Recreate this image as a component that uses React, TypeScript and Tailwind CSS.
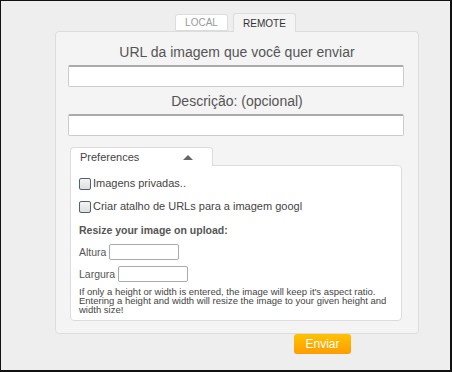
const font = { fontFamily: '"Liberation Sans", Arial, sans-serif' };

const Checkbox = ({ label }: { label: string }) => (
    <label className="flex items-center h-[13px] text-[11px] text-[#444]">
        <span className="w-[12px] h-[12px] border border-[#4d6275] rounded-[2px] bg-gradient-to-b from-[#f4f4f4] to-[#dedede] mr-[2px]" />
        <span>{label}</span>
    </label>
);

const App = () => {
    return (
        <div
            className="w-[452px] h-[372px] bg-[#eeeeee] border-t border-l border-r-2 border-b-2 border-[#111] overflow-hidden"
            style={font}
        >
            <div className="ml-[54px] w-[364px] pt-[12px]">
                {/* Tabs */}
                <div className="flex items-end gap-[5px] ml-[120px]">
                    <div className="w-[53px] h-[17px] bg-white border border-[#dcdcdc] rounded-t-[3px] flex items-center justify-center text-[10px] text-[#999]">
                        LOCAL
                    </div>
                    <div className="relative z-10 w-[63px] h-[19px] bg-[#f4f4f4] border border-b-0 border-[#dcdcdc] rounded-t-[3px] flex items-center justify-center text-[10px] text-[#333] -mb-px">
                        REMOTE
                    </div>
                </div>

                {/* Main panel */}
                <div className="bg-[#f4f4f4] border border-[#dcdcdc] rounded-[4px] pt-[10px] pb-[12px]">
                    <div className="text-center text-[14px] leading-[20px] text-[#555]">
                        URL da imagem que você quer enviar
                    </div>
                    <div className="ml-[12px] mt-[3px] w-[336px] h-[22px] bg-white border border-[#ccc] border-t-[#aaa] border-t-2 rounded-[2px]" />
                    <div className="text-center text-[14px] leading-[20px] text-[#555] mt-[4px]">
                        Descrição: (opcional)
                    </div>
                    <div className="ml-[12px] mt-[3px] w-[336px] h-[22px] bg-white border border-[#ccc] border-t-[#aaa] border-t-2 rounded-[2px]" />

                    {/* Preferences */}
                    <div className="ml-[14px] mt-[11px] w-[332px]">
                        <div className="relative z-10 w-[143px] h-[19px] bg-white border border-b-0 border-[#dcdcdc] rounded-t-[4px] flex items-center pl-[9px] text-[11px] text-[#444] -mb-px">
                            <span>Preferences</span>
                            <span className="ml-[44px] w-0 h-0 border-l-[5px] border-r-[5px] border-b-[5px] border-l-transparent border-r-transparent border-b-[#666]" />
                        </div>
                        <div className="bg-white border border-[#dcdcdc] rounded-b-[4px] rounded-tr-[4px] pl-[8px] pr-[6px] pt-[11px] pb-[6px]">
                            <Checkbox label="Imagens privadas.." />
                            <div className="mt-[10px]">
                                <Checkbox label="Criar atalho de URLs para a imagem googl" />
                            </div>
                            <div className="mt-[10px] text-[10.5px] font-bold text-[#555] leading-[14px]">
                                Resize your image on upload:
                            </div>
                            <div className="mt-[7px] flex items-center h-[16px] text-[10.5px] leading-[16px] text-[#555]">
                                <span>Altura</span>
                                <span className="ml-[3px] w-[70px] h-[16px] border border-[#aaa] rounded-[2px] bg-white" />
                            </div>
                            <div className="mt-[6px] flex items-center h-[16px] text-[10.5px] leading-[16px] text-[#555]">
                                <span>Largura</span>
                                <span className="ml-[3px] w-[70px] h-[16px] border border-[#aaa] rounded-[2px] bg-white" />
                            </div>
                            <p className="mt-[5px] text-[9.5px] leading-[9px] text-[#444]">
                                If only a height or width is entered, the image will keep it's aspect ratio. Entering a height and width will resize the image to your given height and width size!
                            </p>
                        </div>
                    </div>
                </div>

                {/* Submit */}
                <button className="ml-[239px] w-[57px] h-[20px] rounded-[3px] bg-gradient-to-b from-[#ffc300] to-[#ff9c00] text-white text-[12px] flex items-center justify-center">
                    Enviar
                </button>
            </div>
        </div>
    );
};

export default App;
